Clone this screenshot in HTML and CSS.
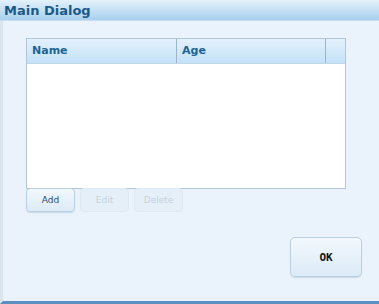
FILE: index.html
```html
<!DOCTYPE html>
<html lang="en">
<head>
    <meta charset="UTF-8">
    <title>Main Dialog</title>
    <link rel="stylesheet" href="styles.css">
</head>
<body>
    <div class="dialog">
        <div class="title-bar">Main Dialog</div>

        <div class="content">
            <div class="table">
                <div class="table-head">
                    <div class="col col-name">Name</div>
                    <div class="col col-age">Age</div>
                    <div class="col col-end"></div>
                </div>
                <div class="table-body"></div>
            </div>

            <div class="buttons">
                <button class="btn">Add</button>
                <button class="btn" disabled>Edit</button>
                <button class="btn" disabled>Delete</button>
            </div>

            <div class="footer">
                <button class="btn ok-btn">OK</button>
            </div>
        </div>
    </div>
</body>
</html>
```

FILE: styles.css
```css
body {
    margin: 0;
    font-family: "DejaVu Sans", Verdana, sans-serif;
    background: #e9f2fa;
}

.dialog {
    width: 379px;
    height: 304px;
    box-sizing: border-box;
    background: #eaf3fb;
    border-left: 3px solid #dbe5ee;
    border-bottom: 3px solid #5a8fbf;
    display: flex;
    flex-direction: column;
}

/* title */
.title-bar {
    height: 21px;
    margin-left: -3px;
    padding-left: 4px;
    box-sizing: border-box;
    background: linear-gradient(#e4f1fb, #b9daf2 70%, #a9d0ee);
    border-bottom: 1px solid #c9dfef;
    color: #1c5a88;
    font-family: "DejaVu Sans", sans-serif;
    font-weight: bold;
    font-size: 13px;
    line-height: 21px;
}

.content {
    flex: 1;
    padding: 17px 0 0 23px;
    display: flex;
    flex-direction: column;
}

/* table */
.table {
    width: 320px;
    height: 151px;
    box-sizing: border-box;
    border: 1px solid #b3c6d6;
    background: #fff;
    display: flex;
    flex-direction: column;
}

.table-head {
    height: 24px;
    display: flex;
    background: linear-gradient(#e2f1fc, #c4e2f7);
    border-bottom: 1px solid #c2d8ea;
}

.col {
    border-right: 1px solid #9fb4c6;
    color: #1d6494;
    font-weight: bold;
    font-size: 11px;
    line-height: 24px;
    padding-left: 5px;
}

.col-name { width: 144px; }
.col-age { width: 143px; }
.col-end { flex: 1; border-right: none; }

.table-body {
    flex: 1;
}

/* buttons */
.buttons {
    display: flex;
    gap: 5px;
    margin-top: -1px;
}

.btn {
    width: 49px;
    height: 24px;
    padding: 0;
    border: 1px solid #bccfe0;
    border-radius: 4px;
    background: linear-gradient(#f2f8fd, #dcebf7);
    color: #1e4e72;
    font-family: "DejaVu Sans", sans-serif;
    font-size: 9px;
    box-shadow: 0 1px 1px rgba(130, 160, 190, 0.3);
}

.btn:disabled {
    color: #c5d2dd;
    border-color: #dfe9f2;
    background: #e4eff8;
    box-shadow: none;
}

.footer {
    display: flex;
    justify-content: flex-end;
    padding-right: 17px;
    margin-top: 25px;
}

.ok-btn {
    width: 72px;
    height: 40px;
    border-radius: 5px;
    color: #111;
    font-family: "DejaVu Sans Mono", monospace;
    font-weight: bold;
    font-size: 11px;
}
```
